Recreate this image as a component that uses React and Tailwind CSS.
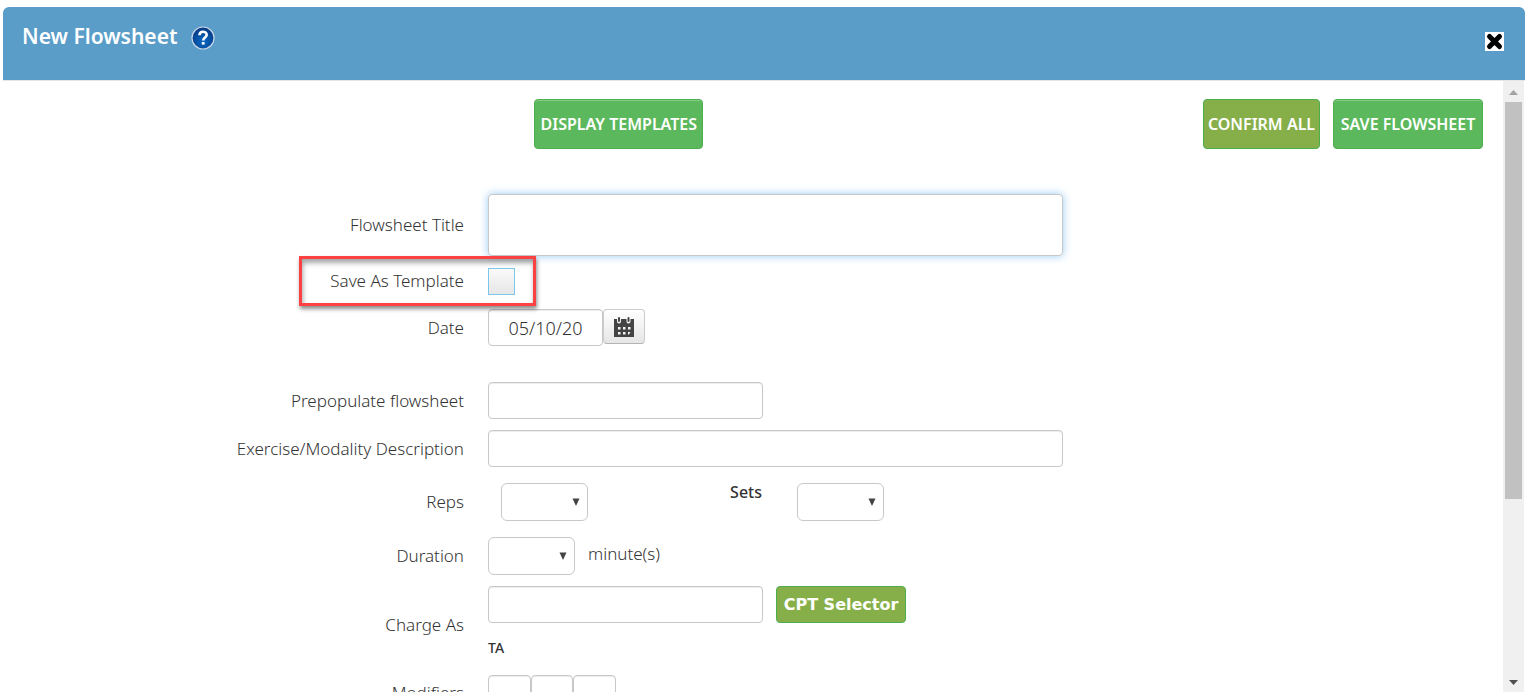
import React, { useState } from "react";

const FIELD = "border border-[#c8c8c8] rounded bg-white text-[#333] outline-none";
const INSET = "shadow-[inset_0_1px_1px_rgba(0,0,0,0.075)]";

const HelpIcon = () => (
  <svg width="24" height="24" viewBox="0 0 24 24" fill="none">
    <defs>
      <radialGradient id="helpFill" cx="0.5" cy="0.65" r="0.6">
        <stop offset="0" stopColor="#0a6cc8" />
        <stop offset="1" stopColor="#063a83" />
      </radialGradient>
    </defs>
    <circle cx="12" cy="12" r="11" fill="url(#helpFill)" stroke="#c9d6e6" strokeWidth="1.2" />
    <path d="M8.500 9.200c0-4.600 7.200-4.500 7.200-.4 0 2.700-3.500 2.700-3.500 5.600" stroke="#fff" strokeWidth="2.600" />
    <rect x="10.800" y="16" width="2.800" height="2.600" fill="#fff" />
  </svg>
);

const CloseIcon = () => (
  <svg width="19" height="19" viewBox="0 0 19 19" fill="none" stroke="#000" strokeWidth="5" strokeLinecap="round">
    <path d="M4.500 4.500l10 10M14.500 4.500l-10 10" />
  </svg>
);

const CalendarIcon = () => (
  <svg width="20" height="20" viewBox="0 0 20 20" fill="#444">
    <path d="M0 2h3v2.500a2 2 0 004 0V2h5.500v2.500a2 2 0 004 0V2H20v18H0z" />
    <rect x="4" y="0" width="2" height="5" rx="1" />
    <rect x="13.500" y="0" width="2" height="5" rx="1" />
    <path
      d="M4 10h2.500v2.500H4zM9 10h2.500v2.500H9zM14 10h2.500v2.500H14zM4 15h2.500v2.500H4zM9 15h2.500v2.500H9zM14 15h2.500l-1.500 2.500h-1z"
      fill="#f2f2f2"
    />
  </svg>
);

const Row = ({ id, label, className = "", children, mark }) => (
  <div className={`grid grid-cols-[minmax(0,461fr)_minmax(0,1015fr)] gap-6 ${className}`}>
    <div className="relative flex items-center justify-end">
      <label htmlFor={id}>{label}</label>
      {mark && (
        <span className="absolute inset-y-0 -right-[72px] w-[237px] border-3 border-[#fb4141] shadow-[1px_3px_4px_rgba(0,0,0,0.45),inset_1px_4px_5px_rgba(0,0,0,0.35)] pointer-events-none" />
      )}
    </div>
    <div>{children}</div>
  </div>
);

const Select = ({ id }) => (
  <div className="relative w-[87px]">
    <select id={id} className="block w-full h-[38px] border border-[#c8c8c8] rounded-md bg-white appearance-none outline-none">
      <option value=""></option>
      <option value="5">5</option>
      <option value="10">10</option>
      <option value="15">15</option>
    </select>
    <svg className="absolute right-2 top-[15px] pointer-events-none" width="8" height="8" viewBox="0 0 8 8" fill="#444">
      <path d="M0.500 0.500h7L4 8z" />
    </svg>
  </div>
);

export default function App() {
  const [date, setDate] = useState("05/10/20");

  return (
    <div className="h-screen flex flex-col overflow-hidden bg-white pt-[7px] pl-[3px] pr-[5px] font-['Noto_Sans',sans-serif] text-[17px] leading-6 font-light text-[#333]">
      {/* Header */}
      <header className="shrink-0 h-[74px] flex items-start justify-between rounded-t-md bg-[#5a9dc8] border-b border-[#e5e5e5] pl-[19px] pr-[21px]">
        <div className="flex items-start gap-[14px] pt-[13px]">
          <h1 className="text-[21px] leading-8 font-semibold text-white">New Flowsheet</h1>
          <button type="button" aria-label="Help" className="mt-[6px]">
            <HelpIcon />
          </button>
        </div>
        <button type="button" aria-label="Close" className="mt-[25px] bg-white">
          <CloseIcon />
        </button>
      </header>

      <div className="flex-1 min-h-0 flex">
        <main className="flex-1 min-w-0 overflow-hidden">
          {/* Toolbar */}
          <div className="flex items-center pt-[18px] pr-5 text-base font-semibold text-white">
            <button type="button" className="ml-[35.9%] w-[169px] h-[50px] rounded border border-[#4cae4c] bg-[#5cb85c] whitespace-nowrap shadow-[inset_0_1px_0_rgba(255,255,255,0.25)]">
              DISPLAY TEMPLATES
            </button>
            <button type="button" className="ml-auto w-[117px] h-[50px] rounded border border-[#4cae4c] bg-[#87af49] whitespace-nowrap">
              CONFIRM ALL
            </button>
            <button type="button" className="ml-[13px] w-[150px] h-[50px] rounded border border-[#4cae4c] bg-[#5cb85c] whitespace-nowrap shadow-[inset_0_1px_0_rgba(255,255,255,0.25)]">
              SAVE FLOWSHEET
            </button>
          </div>

          {/* Form */}
          <form className="pt-[45px]">
            <Row id="title" label="Flowsheet Title">
              <input id="title" type="text" className={`${FIELD} block w-full max-w-[575px] h-[62px] px-3 shadow-[0_0_8px_rgba(82,168,236,0.6)]`} />
            </Row>
            <Row id="template" label="Save As Template" mark>
              <div className="h-[50px] flex items-center">
                <input id="template" type="checkbox" className="appearance-none w-[27px] h-[27px] border border-[#7cc8ea] bg-linear-to-b from-[#fafafa] to-[#e6e6e6] checked:bg-[#7cc8ea]" />
              </div>
            </Row>
            <Row id="date" label="Date" className="mt-[3px]">
              <div className="flex items-start">
                <input
                  id="date"
                  type="text"
                  value={date}
                  onChange={(e) => setDate(e.target.value)}
                  className={`${FIELD} ${INSET} w-[115px] h-[37px] text-center text-lg`}
                />
                <button type="button" aria-label="Pick a date" className="w-[42px] h-[35px] flex items-center justify-center rounded border border-[#ccc] border-b-[#b3b3b3] bg-linear-to-b from-white to-[#e6e6e6]">
                  <CalendarIcon />
                </button>
              </div>
            </Row>
            <Row id="prepopulate" label="Prepopulate flowsheet" className="mt-9">
              <input id="prepopulate" type="text" className={`${FIELD} ${INSET} block w-[275px] h-[37px] px-3`} />
            </Row>
            <Row id="exercise" label="Exercise/Modality Description" className="mt-[11px]">
              <input id="exercise" type="text" className={`${FIELD} ${INSET} block w-full max-w-[575px] h-[37px] px-3`} />
            </Row>
            <Row id="reps" label="Reps" className="mt-4">
              <div className="flex items-start pl-[13px]">
                <Select id="reps" />
                <label htmlFor="sets" className="w-[174px] -mt-[3px] text-right text-base leading-6 font-medium">
                  Sets
                </label>
                <div className="ml-[35px]">
                  <Select id="sets" />
                </div>
              </div>
            </Row>
            <Row id="duration" label="Duration" className="mt-4">
              <div className="flex items-start gap-[13px]">
                <Select id="duration" />
                <span className="leading-[34px]">minute(s)</span>
              </div>
            </Row>
            <Row id="charge" label="Charge As" className="mt-[11px]">
              <div className="flex gap-[13px]">
                <input id="charge" type="text" className={`${FIELD} ${INSET} w-[275px] h-[37px] px-3`} />
                <button type="button" className="w-[130px] h-[37px] rounded border border-[#4cae4c] bg-[#87af49] text-white text-base font-bold font-['DejaVu_Sans',sans-serif] whitespace-nowrap">
                  CPT Selector
                </button>
              </div>
              <div className="pt-[13px] pb-1 text-sm leading-6 font-medium">TA</div>
            </Row>
            <Row id="modifier1" label="Modifiers" className="mt-[11px]">
              <div className="flex">
                <input id="modifier1" type="text" className={`${FIELD} ${INSET} w-[43px] h-[35px] px-2`} />
                <input type="text" aria-label="Modifier 2" className={`${FIELD} ${INSET} w-[42px] h-[35px] px-2`} />
                <input type="text" aria-label="Modifier 3" className={`${FIELD} ${INSET} w-[43px] h-[35px] px-2`} />
              </div>
            </Row>
          </form>
        </main>

        {/* Scrollbar */}
        <div className="shrink-0 w-[21px] mr-px flex flex-col items-center bg-[#f0f0f0]">
          <svg className="shrink-0" width="21" height="21" viewBox="0 0 21 21" fill="#a3a3a3">
            <path d="M6 14h9l-4.500-5z" />
          </svg>
          <div className="w-[17px] h-[65%] bg-[#c1c1c1]" />
          <svg className="shrink-0 mt-auto" width="21" height="21" viewBox="0 0 21 21" fill="#505050">
            <path d="M6 9h9l-4.500 5z" />
          </svg>
        </div>
      </div>
    </div>
  );
}
